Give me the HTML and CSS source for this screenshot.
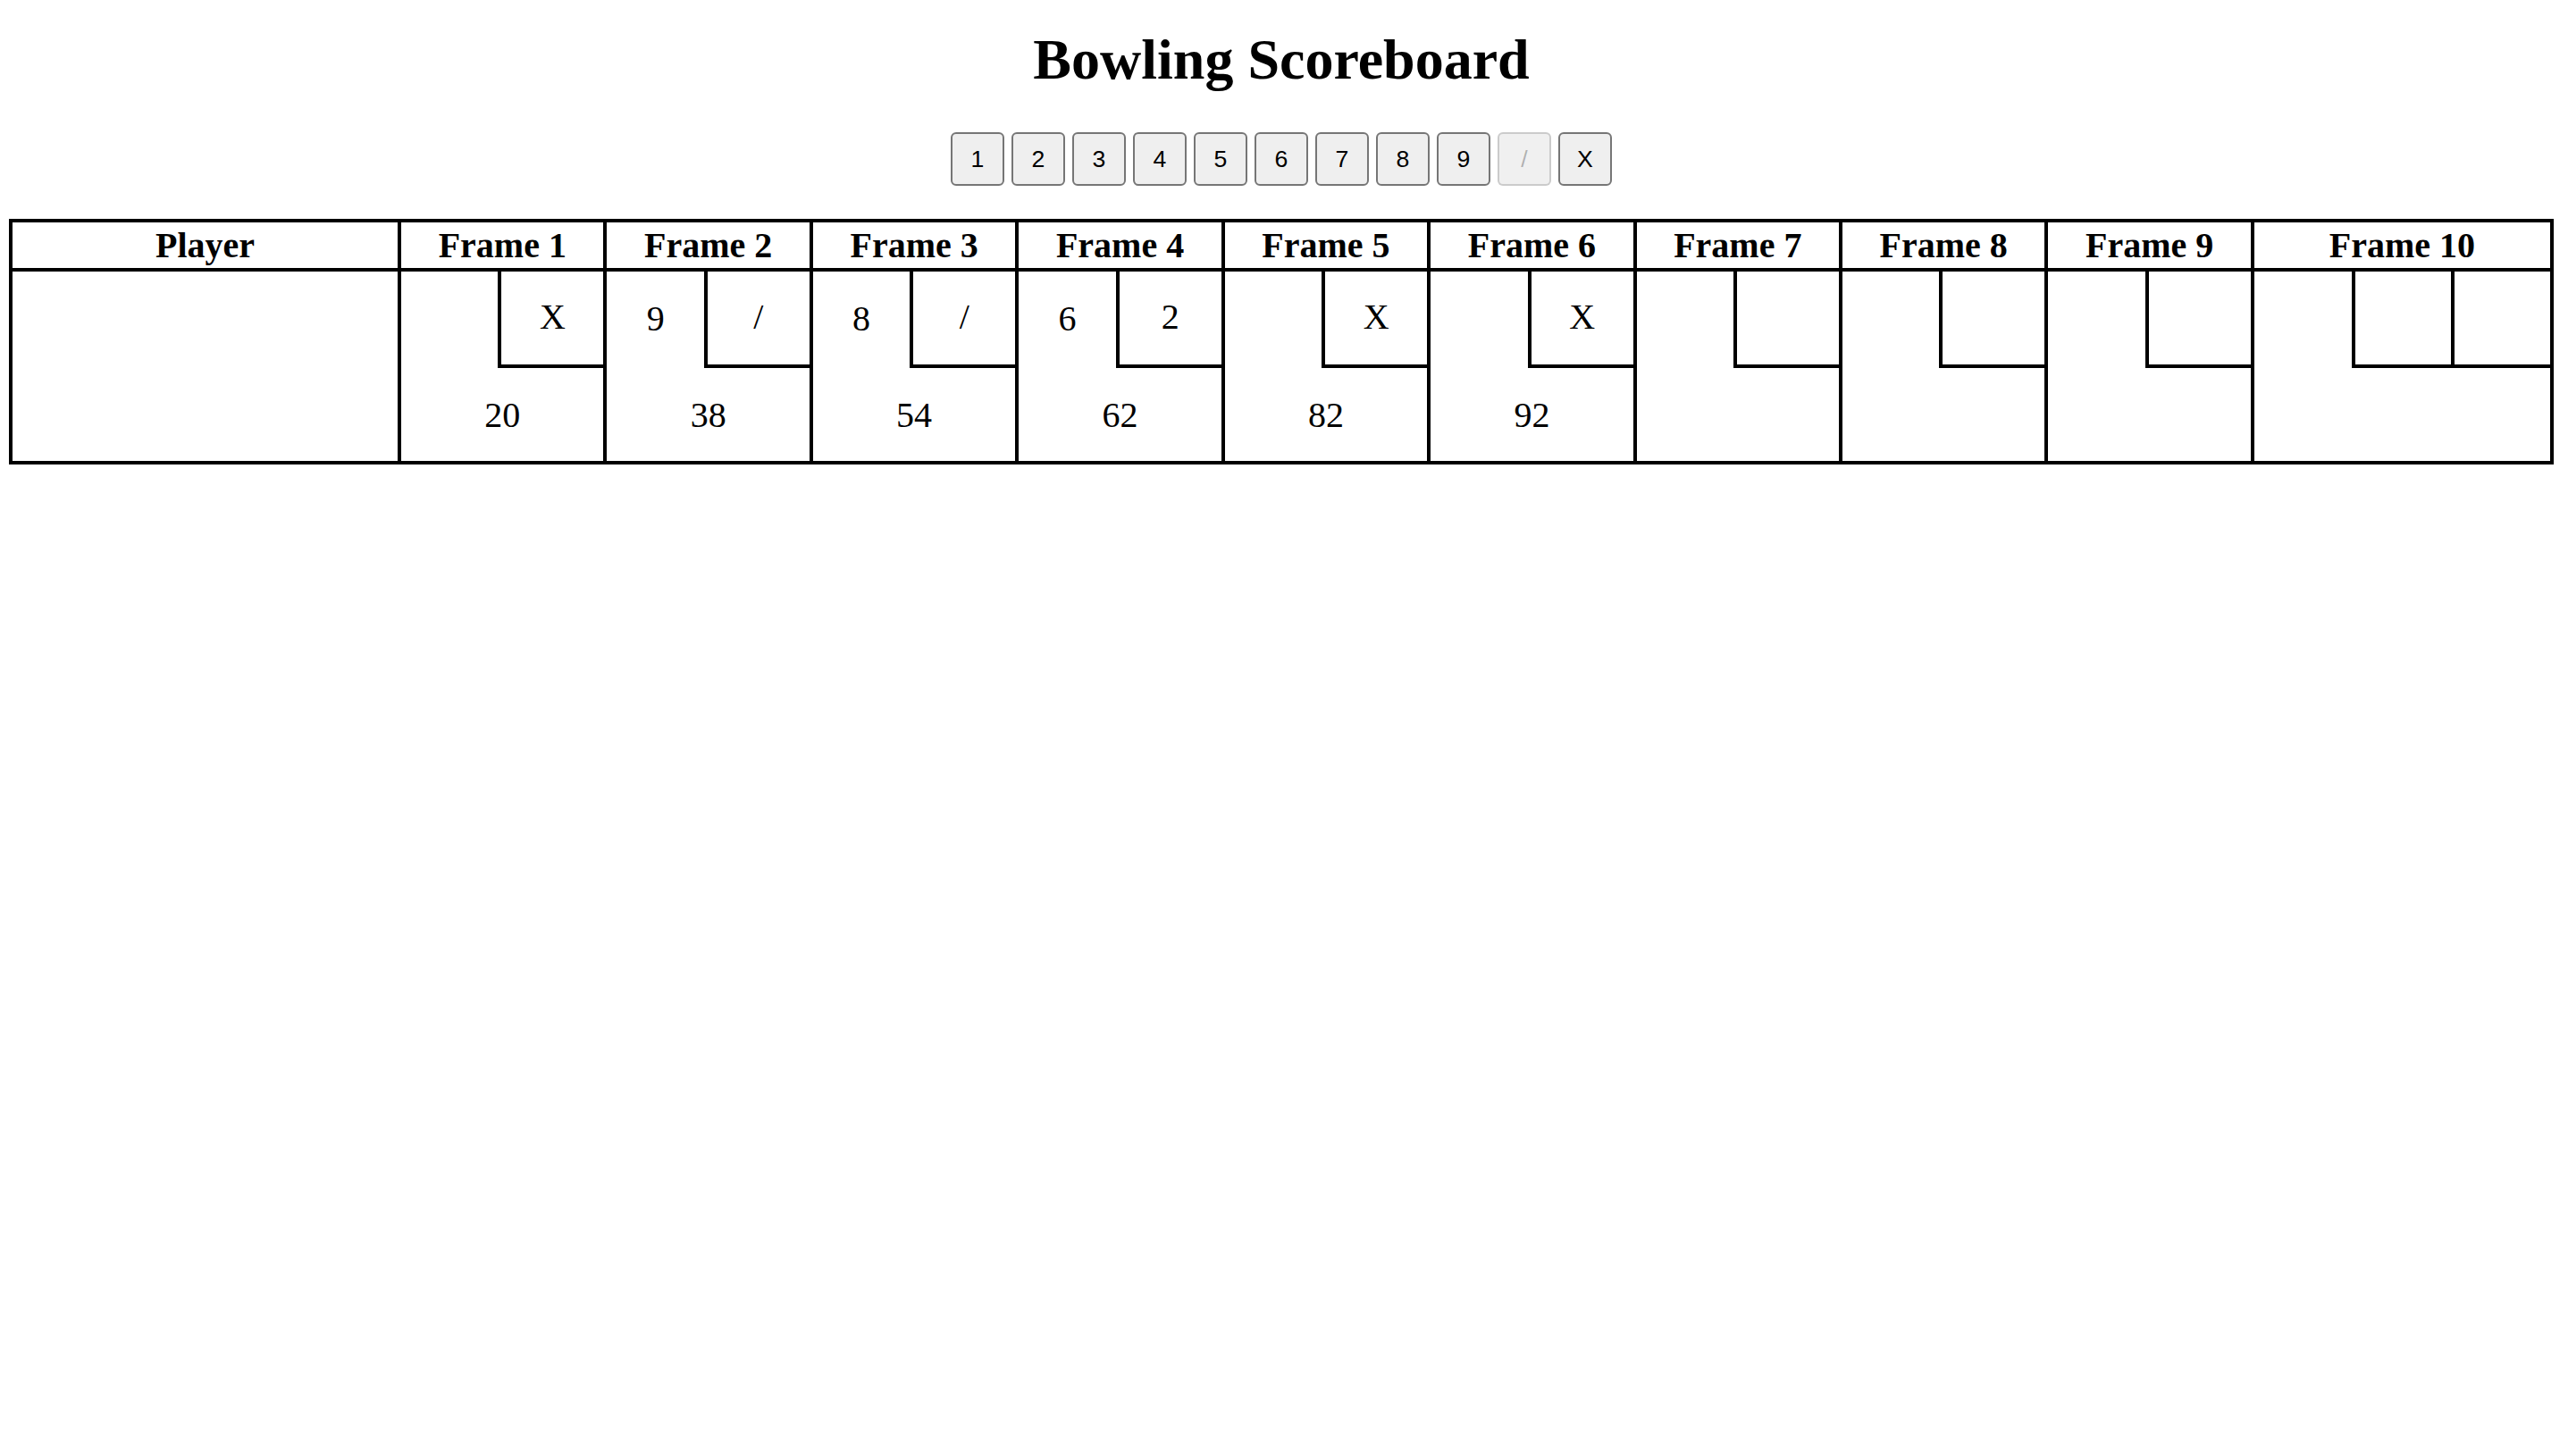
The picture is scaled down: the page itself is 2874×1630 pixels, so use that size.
FILE: index.html
```html
<!DOCTYPE html>
<html lang="en">
<head>
<meta charset="utf-8">
<title>Bowling Scoreboard</title>
<link rel="stylesheet" href="styles.css">
</head>
<body>
<h1 class="title">Bowling Scoreboard</h1>
<div class="pins">
  <button class="pin">1</button>
  <button class="pin">2</button>
  <button class="pin">3</button>
  <button class="pin">4</button>
  <button class="pin">5</button>
  <button class="pin">6</button>
  <button class="pin">7</button>
  <button class="pin">8</button>
  <button class="pin">9</button>
  <button class="pin" disabled>/</button>
  <button class="pin">X</button>
</div>
<table class="board">
  <colgroup>
    <col class="col-player">
    <col class="col-frame"><col class="col-frame"><col class="col-frame">
    <col class="col-frame"><col class="col-frame"><col class="col-frame">
    <col class="col-frame"><col class="col-frame"><col class="col-frame">
    <col class="col-last">
  </colgroup>
  <thead>
    <tr>
      <th>Player</th>
      <th>Frame 1</th><th>Frame 2</th><th>Frame 3</th><th>Frame 4</th><th>Frame 5</th>
      <th>Frame 6</th><th>Frame 7</th><th>Frame 8</th><th>Frame 9</th><th>Frame 10</th>
    </tr>
  </thead>
  <tbody>
    <tr>
      <td class="player"></td>
      <td class="frame"><div class="rolls"><div class="roll"></div><div class="roll box">X</div></div><div class="score">20</div></td>
      <td class="frame"><div class="rolls"><div class="roll">9</div><div class="roll box">/</div></div><div class="score">38</div></td>
      <td class="frame"><div class="rolls"><div class="roll">8</div><div class="roll box">/</div></div><div class="score">54</div></td>
      <td class="frame"><div class="rolls"><div class="roll">6</div><div class="roll box">2</div></div><div class="score">62</div></td>
      <td class="frame"><div class="rolls"><div class="roll"></div><div class="roll box">X</div></div><div class="score">82</div></td>
      <td class="frame"><div class="rolls"><div class="roll"></div><div class="roll box">X</div></div><div class="score">92</div></td>
      <td class="frame"><div class="rolls"><div class="roll"></div><div class="roll box"></div></div><div class="score"></div></td>
      <td class="frame"><div class="rolls"><div class="roll"></div><div class="roll box"></div></div><div class="score"></div></td>
      <td class="frame"><div class="rolls"><div class="roll"></div><div class="roll box"></div></div><div class="score"></div></td>
      <td class="frame last"><div class="rolls"><div class="roll"></div><div class="roll box"></div><div class="roll box"></div></div><div class="score"></div></td>
    </tr>
  </tbody>
</table>
</body>
</html>
```
FILE: styles.css
```css
html, body {
  background: #ffffff;
}
body {
  margin: 0;
  padding: 0 16px 0 10px;
  font-family: "Liberation Serif", "Times New Roman", serif;
  color: #000000;
}
.title {
  margin: 30px 0 44px;
  font-size: 64px;
  font-weight: bold;
  text-align: center;
}
.pins {
  display: flex;
  justify-content: center;
  gap: 8px;
  margin-bottom: 37px;
}
.pin {
  box-sizing: border-box;
  width: 60px;
  height: 60px;
  padding: 0;
  font-family: "Liberation Sans", Arial, sans-serif;
  font-size: 26.67px;
  color: #000000;
  background: #efefef;
  border: 2px solid #767676;
  border-radius: 6px;
}
.pin:disabled {
  color: rgba(16, 16, 16, 0.3);
  border-color: rgba(118, 118, 118, 0.3);
  background: #f0f0f0;
}
.board {
  width: 100%;
  table-layout: fixed;
  border-collapse: collapse;
  font-size: 40px;
}
.col-player { width: 435px; }
.col-frame { width: 230.4px; }
.col-last { width: 335px; }
.board th, .board td {
  border: 4px solid #000000;
}
.board th {
  padding: 2px;
  font-weight: bold;
  text-align: center;
  line-height: normal;
}
.board td {
  padding: 0;
  vertical-align: top;
}
.player {
  height: 212px;
}
.rolls {
  display: flex;
  height: 108px;
}
.roll {
  flex: 1 1 0;
  display: flex;
  align-items: center;
  justify-content: center;
  height: 104px;
}
.roll.box {
  flex: 0 0 118px;
  box-sizing: border-box;
  height: 108px;
  padding-bottom: 4px;
  border-left: 4px solid #000000;
  border-bottom: 4px solid #000000;
}
.last .roll.box {
  flex: 0 0 111px;
}
.score {
  display: flex;
  align-items: center;
  justify-content: center;
  height: 104px;
}
```
